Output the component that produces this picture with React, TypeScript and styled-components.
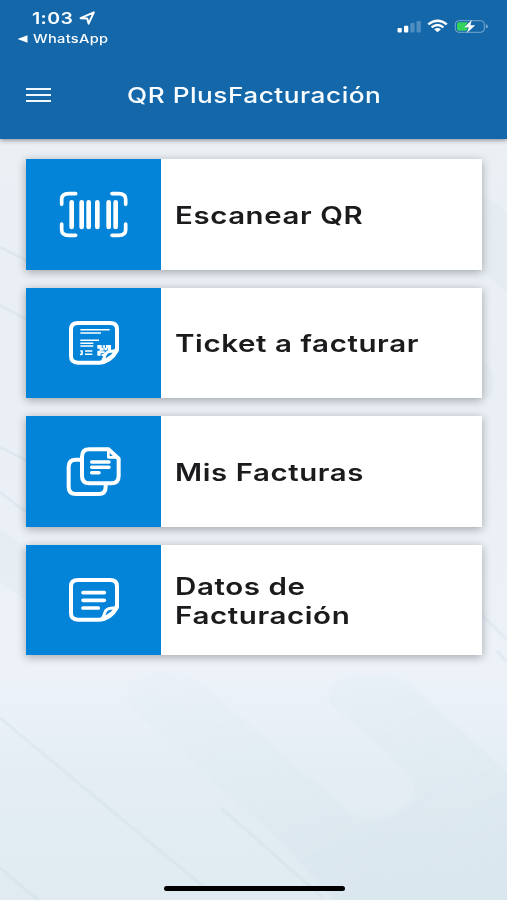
import React from 'react';
import styled, { createGlobalStyle } from 'styled-components';

const GlobalStyle = createGlobalStyle`
  * { box-sizing: border-box; }
  body { margin: 0; font-family: Inter, 'Liberation Sans', sans-serif; }
`;

const Screen = styled.div`
  position: relative;
  display: flex;
  flex-direction: column;
  width: 507px;
  height: 900px;
  overflow: hidden;
  background: linear-gradient(#ebf0f5 139px, #e9eff4 400px, #edf2f9 680px, #e4edf4 780px, #dfeaf1 900px);
`;

const Backdrop = styled.svg`
  position: absolute;
  inset: 0;
  width: 507px;
  height: 900px;
`;

const Header = styled.header`
  position: relative;
  display: flex;
  flex-direction: column;
  height: 139.4px;
  flex: none;
  color: #fafdff;
  background: #1468aa;
  box-shadow: 0 1px 5px rgba(0, 0, 0, 0.45);
`;

const StatusBar = styled.div`
  display: flex;
  justify-content: space-between;
  height: 50px;
  padding: 8px 18px 0 17px;
`;

const StatusLeft = styled.div`
  display: flex;
  flex-direction: column;
`;

const ClockRow = styled.div`
  display: flex;
  align-items: center;
  gap: 6px;
  height: 20px;
  padding-left: 15px;
`;

const BackRow = styled.div`
  display: flex;
  align-items: center;
  gap: 5px;
  height: 21px;
`;

const StatusIcons = styled.svg`
  margin-top: 9px;
  flex: none;
`;

const Clock = styled.span`
  display: block;
  width: 41px;
  white-space: nowrap;
`;

const Wide = styled.span<{ $size: number; $weight: number; $scale: number; $line?: number }>`
  display: inline-block;
  font-size: ${(p) => p.$size}px;
  font-weight: ${(p) => p.$weight};
  line-height: ${(p) => (p.$line ? `${p.$line}px` : 'normal')};
  letter-spacing: 0.02em;
  transform: scaleX(${(p) => p.$scale});
  transform-origin: 0 50%;
`;

const TitleBar = styled.div`
  display: flex;
  align-items: center;
  height: 89px;
  padding-left: 26px;
`;

const MenuButton = styled.button`
  display: flex;
  flex-direction: column;
  gap: 4px;
  width: 25px;
  margin: 0 76px 0 0;
  padding: 0;
  border: 0;
  background: none;
`;

const MenuLine = styled.span`
  height: 2px;
  background: #f2f9fe;
`;

const Title = styled.h1`
  margin: 0;
  font-size: inherit;
  line-height: 1;
`;

const CardList = styled.main`
  position: relative;
  display: flex;
  flex-direction: column;
  gap: 17.8px;
  padding: 19.8px 25px 0 26px;
`;

const Card = styled.section`
  display: flex;
  height: 110.7px;
  background: #fff;
  box-shadow: 0 2px 9px rgba(0, 0, 0, 0.32);
`;

const Tile = styled.div`
  width: 135px;
  height: 100%;
  flex: none;
  background: #0384d9;
`;

const TileArt = styled.svg`
  display: block;
  width: 100%;
  height: 100%;
  fill: none;
  stroke: #fff;
  stroke-linecap: round;
  stroke-linejoin: round;
`;

const Label = styled.div`
  display: flex;
  flex-direction: column;
  justify-content: center;
  padding: 1.4px 0 0 14.4px;
  color: #1b1b1d;
`;

const HomeIndicator = styled.div`
  position: absolute;
  left: 164px;
  bottom: 9px;
  width: 181px;
  height: 5.5px;
  border-radius: 3px;
  background: #000;
`;

const BarcodeArt = () => (
  <TileArt viewBox="0 0 405 332">
    <path
      strokeWidth="11"
      d="M107 136V121Q107 104 128 104H149M258 104H278Q299 104 299 121V136M299 195V212Q299 229 278 229H258M149 229H128Q107 229 107 212V195"
    />
    <path strokeWidth="14" d="M137 130V204M167 130V204M188 130V204M214 130V204M248 130V204M269 130V204" />
  </TileArt>
);

const sheet = 'M273 187V124Q273 105 252 105H156Q135 105 135 124V205Q135 224 156 224H220Q254 222 273 187';
const fold = 'M228 221Q234 214 236 204Q240 191 255 190Q266 190 272 184Q264 206 228 221Z';

const TicketArt = () => (
  <TileArt viewBox="0 0 405 332">
    <path strokeWidth="12" d={sheet} />
    <g strokeLinecap="butt" strokeWidth="4.5">
      <path d="M163 125H251M163 135H225M163 157H219M163 166H202M163 174H202M177 189H199M177 199H199" />
      <path strokeWidth="5" d="M163 189H168V199H162" />
    </g>
    <path
      stroke="none"
      fill="#fff"
      d="M214 171h13v11h-13zM230 172h7v7h-7zM240 171h15v10h-15zM221 180h12v8h-12zM235 179h9v8h-9zM214 188h10v15h-10zM224 190h12v6h-12zM227 198h8v6h-8zM246 180h9v7h-9z"
    />
    <path strokeWidth="9" fill="#0384d9" d={fold} />
  </TileArt>
);

const CopiesArt = () => (
  <TileArt viewBox="0 0 405 332">
    <path strokeWidth="12" d="M162 131H150Q128 131 128 153V212Q128 234 150 234H218Q239 234 239 212V205" />
    <path strokeWidth="12" d="M248 100H190Q168 100 168 122V180Q168 202 190 202H256Q278 202 278 180V128Z" />
    <path strokeWidth="8" d="M247 102V124H276" />
    <path strokeWidth="10.5" d="M197 138H249M197 154H249M197 170H219" />
  </TileArt>
);

const NoteArt = () => (
  <TileArt viewBox="0 0 405 332">
    <path strokeWidth="12" d={sheet} />
    <path strokeWidth="9" fill="#0384d9" d={fold} />
    <path strokeWidth="11" d="M171 143H235M171 166H235M171 189H217" />
  </TileArt>
);

type Item = { art: React.ReactNode; lines: { text: string; scale: number }[] };

const items: Item[] = [
  { art: <BarcodeArt />, lines: [{ text: 'Escanear QR', scale: 1.225 }] },
  { art: <TicketArt />, lines: [{ text: 'Ticket a facturar', scale: 1.23 }] },
  { art: <CopiesArt />, lines: [{ text: 'Mis Facturas', scale: 1.225 }] },
  {
    art: <NoteArt />,
    lines: [
      { text: 'Datos de', scale: 1.23 },
      { text: 'Facturación', scale: 1.23 },
    ],
  },
];

export default function App() {
  return (
    <>
      <GlobalStyle />
      <Screen>
        <Backdrop viewBox="0 0 507 900" aria-hidden="true">
          <defs>
            <linearGradient id="band" x1="0" y1="0" x2="1" y2="1">
              <stop offset="0" stopColor="#cfe2e8" stopOpacity="0.08" />
              <stop offset="1" stopColor="#c8dde6" stopOpacity="0.27" />
            </linearGradient>
            <filter id="soft">
              <feGaussianBlur stdDeviation="1.5" />
            </filter>
          </defs>
          <path
            fill="url(#band)"
            filter="url(#soft)"
            d="M128 705C110 676 170 662 203 684L350 813C382 826 418 808 414 787C411 773 395 760 380 747L330 704C318 675 370 667 408 682L520 784V910H345L270 832Z"
          />
          <g fill="none" stroke="#c9dce6" strokeOpacity="0.3" strokeWidth="3">
            <path d="M0 718L205 888M0 868L38 900M221 808L322 897M497 651L507 662M0 247L26 260M0 305L26 319M0 447L26 460M0 492L26 512M482 615L507 640" />
          </g>
          <g fill="#ccdde6" fillOpacity="0.16">
            <path d="M482 198Q498 200 507 213V292L482 272Z" />
            <path d="M0 530Q16 535 26 552V600L0 582Z" />
            <path d="M482 360Q498 370 492 395L482 400Z" />
          </g>
        </Backdrop>
        <Header>
          <StatusBar>
            <StatusLeft>
              <ClockRow>
                <Clock>
                  <Wide $size={16.5} $weight={600} $scale={1.18}>1:03</Wide>
                </Clock>
                <svg width="17" height="14" viewBox="0 0 17 14" fill="none" stroke="#fff" strokeWidth="2" strokeLinejoin="round">
                  <path d="M1.6 7.2L14.8 1.4L9.6 12.6L8.2 7.6Z" />
                </svg>
              </ClockRow>
              <BackRow>
                <svg width="11" height="8" viewBox="0 0 11 8">
                  <path fill="#fff" d="M.5 4L10.5 .3V7.7Z" />
                </svg>
                <Wide $size={12} $weight={500} $scale={1.22}>WhatsApp</Wide>
              </BackRow>
            </StatusLeft>
            <StatusIcons width="92" height="20" viewBox="0 0 92 20">
              <g fill="#fff">
                <rect x="0.5" y="11" width="4.3" height="4.5" rx="1" />
                <rect x="7" y="8.7" width="4.3" height="6.8" rx="1" />
                <rect x="13.3" y="6" width="4.3" height="9.5" rx="1" opacity="0.25" />
                <rect x="19.5" y="4" width="4.3" height="11.5" rx="1" opacity="0.25" />
              </g>
              <g fill="none" stroke="#fff" strokeWidth="2.4">
                <path d="M31.3 7.4Q40.5 .2 49.8 7.4" />
                <path d="M34.6 10.4Q40.5 5.8 46.5 10.4" />
              </g>
              <path fill="#fff" d="M37.2 12.3Q40.5 9.8 43.9 12.3L40.5 15.3Z" />
              <rect x="58.3" y="3.7" width="29" height="11.6" rx="3.5" fill="none" stroke="#fff" strokeOpacity="0.42" />
              <path fill="#fff" fillOpacity="0.42" d="M88.8 7.2Q91 7.5 91 9.3T88.8 11.6Z" />
              <path fill="#34d35c" d="M62 5.3H71L67.5 10H71L69.5 13.7H62Q60 13.7 60 11.8V7.2Q60 5.3 62 5.3Z" />
              <path fill="#fff" d="M74.8 3L67.2 10.2H71.8L69.8 16L78.2 8.3H73.4Z" />
            </StatusIcons>
          </StatusBar>
          <TitleBar>
            <MenuButton aria-label="Menú">
              <MenuLine />
              <MenuLine />
              <MenuLine />
            </MenuButton>
            <Title>
              <Wide $size={22} $weight={500} $scale={1.19}>QR PlusFacturación</Wide>
            </Title>
          </TitleBar>
        </Header>
        <CardList>
          {items.map((item) => (
            <Card key={item.lines[0].text}>
              <Tile>{item.art}</Tile>
              <Label>
                {item.lines.map((l) => (
                  <Wide key={l.text} $size={24} $weight={600} $scale={l.scale} $line={29}>
                    {l.text}
                  </Wide>
                ))}
              </Label>
            </Card>
          ))}
        </CardList>
        <HomeIndicator />
      </Screen>
    </>
  );
}
